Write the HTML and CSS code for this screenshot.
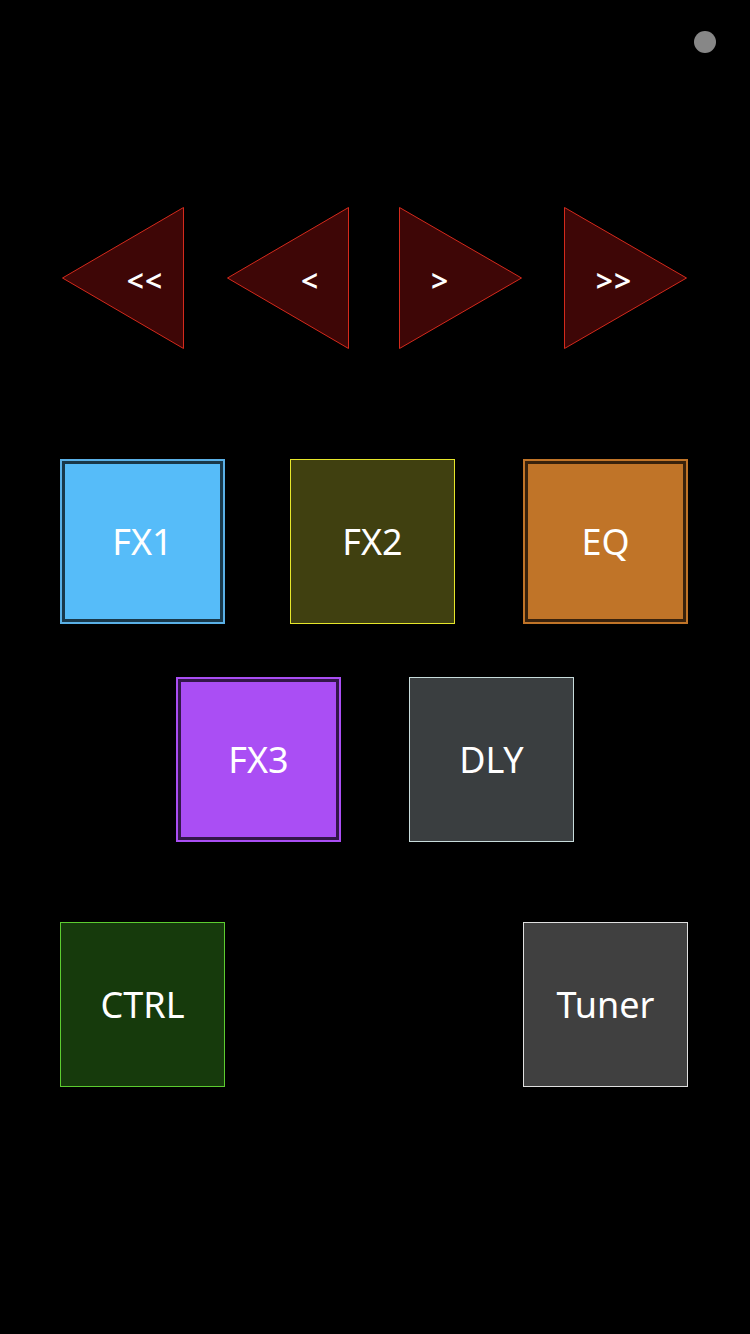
FILE: index.html
```html
<!DOCTYPE html>
<html>
<head>
    <title>Pedal Remote</title>
    <link rel="stylesheet" href="styles.css">
</head>
<body>
    <div class="status-bar">
        <span class="dot"></span>
    </div>

    <div class="transport">
        <button class="arrow left">
            <svg viewBox="0 0 122 142"><polygon points="0.5,71 121.5,0.5 121.5,141.5"/></svg>
            <span class="label">&lt;&lt;</span>
        </button>
        <button class="arrow left">
            <svg viewBox="0 0 122 142"><polygon points="0.5,71 121.5,0.5 121.5,141.5"/></svg>
            <span class="label">&lt;</span>
        </button>
        <button class="arrow right">
            <svg viewBox="0 0 123 142"><polygon points="0.5,0.5 122.5,71 0.5,141.5"/></svg>
            <span class="label">&gt;</span>
        </button>
        <button class="arrow right far">
            <svg viewBox="0 0 123 142"><polygon points="0.5,0.5 122.5,71 0.5,141.5"/></svg>
            <span class="label">&gt;&gt;</span>
        </button>
    </div>

    <div class="pads">
        <div class="row">
            <button class="pad fx1 on">FX1</button>
            <button class="pad fx2">FX2</button>
            <button class="pad eq on">EQ</button>
        </div>
        <div class="row middle">
            <button class="pad fx3 on">FX3</button>
            <button class="pad dly">DLY</button>
        </div>
        <div class="row last">
            <button class="pad ctrl">CTRL</button>
            <button class="pad tuner">Tuner</button>
        </div>
    </div>
</body>
</html>
```

FILE: styles.css
```css
body {
    margin: 0;
    background: #000;
    color: #fff;
    font-family: 'Noto Sans', 'Open Sans', sans-serif;
    width: 750px;
    height: 1334px;
    overflow: hidden;
}
button {
    font-family: inherit;
    color: #fff;
    padding: 0;
    cursor: pointer;
}
.status-bar {
    display: flex;
    justify-content: flex-end;
    padding: 31px 34px 0 0;
    height: 22px;
}
.dot {
    width: 22px;
    height: 22px;
    border-radius: 50%;
    background: #878787;
}

/* transport arrows */
.transport {
    display: flex;
    padding-left: 62px;
    margin-top: 154px;
}
.arrow {
    position: relative;
    width: 122px;
    height: 142px;
    background: none;
    border: none;
}
.arrow + .arrow {
    margin-left: 43px;
}
.arrow.right {
    width: 123px;
    margin-left: 50px;
}
.arrow.right.far {
    margin-left: 42px;
}
.arrow svg {
    display: block;
    width: 100%;
    height: 142px;
}
.arrow polygon {
    fill: #3e0606;
    stroke: #d42a1c;
    stroke-width: 1;
}
.arrow .label {
    position: absolute;
    top: 74px;
    transform: translate(-50%, -50%);
    font-size: 30px;
    font-weight: 600;
    line-height: 1;
    letter-spacing: 1px;
}
.arrow.left .label {
    left: 83px;
}
.arrow.right .label {
    left: 41px;
}
.arrow.right.far .label {
    left: 50px;
}

/* pads */
.pads {
    margin: 110px 0 0 60px;
}
.row {
    display: flex;
}
.fx2 {
    margin-left: 65px;
}
.eq {
    margin-left: 68px;
}
.row.middle {
    padding-left: 116px;
    gap: 68px;
    margin-top: 53px;
}
.row.last {
    margin-top: 80px;
    gap: 298px;
}
.pad {
    width: 165px;
    height: 165px;
    box-sizing: border-box;
    font-size: 36px;
    border: 1px solid;
}
.pad.on {
    border-width: 2px;
    box-shadow: inset 0 0 0 3px rgba(0, 0, 0, 0.7);
}
.fx1 {
    background: #56bcf9;
    border-color: #5ab0e6;
}
.fx2 {
    background: #404010;
    border-color: #e6e62a;
}
.eq {
    background: #c07428;
    border-color: #c07428;
}
.fx3 {
    background: #aa4ef4;
    border-color: #aa4ef4;
}
.dly {
    background: #3a3e40;
    border-color: #c8dcdc;
}
.ctrl {
    background: #163a0c;
    border-color: #5ccc30;
}
.tuner {
    background: #404040;
    border-color: #e0e0e0;
}
```
